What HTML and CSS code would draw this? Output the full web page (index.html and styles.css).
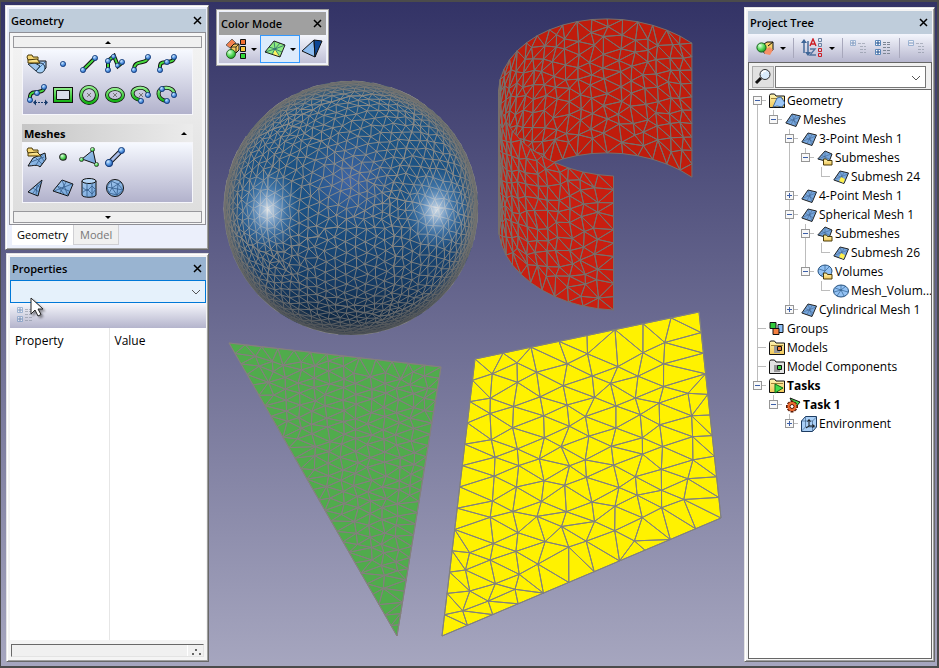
FILE: index.html
```html
<!DOCTYPE html>
<html lang="en">
<head>
<meta charset="utf-8">
<title>Mesh Studio</title>
<link rel="stylesheet" href="styles.css">
</head>
<body>
<svg class="defs" aria-hidden="true">
  <defs>
    <linearGradient id="g-green" x1="0" y1="0" x2="0" y2="1"><stop offset="0" stop-color="#8ff08a"/><stop offset="1" stop-color="#12b012"/></linearGradient>
    <radialGradient id="g-ball" cx=".35" cy=".3" r=".8"><stop offset="0" stop-color="#d6ecff"/><stop offset=".5" stop-color="#5c9de6"/><stop offset="1" stop-color="#1b4fa8"/></radialGradient>
    <radialGradient id="g-gball" cx=".35" cy=".3" r=".8"><stop offset="0" stop-color="#e0ffe0"/><stop offset=".5" stop-color="#5cdc60"/><stop offset="1" stop-color="#108a14"/></radialGradient>
    <linearGradient id="g-mesh" x1="0" y1="0" x2="1" y2="1"><stop offset="0" stop-color="#a9cdf2"/><stop offset="1" stop-color="#6ea0d6"/></linearGradient>
    <linearGradient id="g-folder" x1="0" y1="0" x2="0" y2="1"><stop offset="0" stop-color="#fff6b4"/><stop offset="1" stop-color="#f2c758"/></linearGradient>
    <symbol id="ball" viewBox="0 0 6 6"><circle cx="3" cy="3" r="2.6" fill="url(#g-ball)" stroke="#123a78" stroke-width=".8"/></symbol>
    <symbol id="gball" viewBox="0 0 6 6"><circle cx="3" cy="3" r="2.5" fill="url(#g-gball)" stroke="#222" stroke-width=".8"/></symbol>

    <symbol id="i-shapes" viewBox="0 0 22 22">
      <path d="M11 8h9v7l-3 3h-6z" fill="#a9cdf2" stroke="#111"/><circle cx="14" cy="15" r="5" fill="#a4d0f8" stroke="#234"/><path d="M11 17l8-8" stroke="#4675ad"/><path d="M2 11l8 7 4-5-5-3z" fill="#9ec5ee" stroke="#234"/>
      <path d="M1 4l1-2h4l1 2h5v3H2z" fill="#f6d774" stroke="#4a3a08"/><path d="M2 10V7l9-1 3 4z" fill="url(#g-folder)" stroke="#4a3a08"/>
    </symbol>
    <symbol id="i-point" viewBox="0 0 22 22"><use href="#ball" x="8" y="8" width="6" height="6"/></symbol>
    <symbol id="i-line" viewBox="0 0 22 22"><path d="M5 17L17 5" stroke="#111" stroke-width="4"/><path d="M5 17L17 5" stroke="#46d83e" stroke-width="2"/><use href="#ball" x="2" y="14" width="6" height="6"/><use href="#ball" x="14" y="2" width="6" height="6"/></symbol>
    <symbol id="i-poly" viewBox="0 0 22 22"><path d="M4 18V8l6-5 4 10 5-4" fill="none" stroke="#111" stroke-width="4"/><path d="M4 18V8l6-5 4 10 5-4" fill="none" stroke="#46d83e" stroke-width="2"/><use href="#ball" x="1" y="14" width="6" height="6"/><use href="#ball" x="1" y="5" width="6" height="6"/><use href="#ball" x="7" y="1" width="5" height="5"/><use href="#ball" x="11" y="10" width="5" height="5"/><use href="#ball" x="15" y="6" width="6" height="6"/></symbol>
    <symbol id="i-arc" viewBox="0 0 22 22"><path d="M4 17c0-12 13-4 14-13" fill="none" stroke="#111" stroke-width="4"/><path d="M4 17c0-12 13-4 14-13" fill="none" stroke="#46d83e" stroke-width="2"/><use href="#ball" x="1" y="14" width="6" height="6"/><use href="#ball" x="15" y="1" width="6" height="6"/></symbol>
    <symbol id="i-spline" viewBox="0 0 22 22"><path d="M4 17c-1-10 4-7 8-8s6-1 6-5" fill="none" stroke="#111" stroke-width="4"/><path d="M4 17c-1-10 4-7 8-8s6-1 6-5" fill="none" stroke="#46d83e" stroke-width="2"/><use href="#ball" x="1" y="14" width="6" height="6"/><use href="#ball" x="8" y="6" width="6" height="6"/><use href="#ball" x="15" y="1" width="6" height="6"/></symbol>
    <symbol id="i-fit" viewBox="0 0 22 22"><path d="M4 16c-1-9 4-7 8-8s6-1 6-5" fill="none" stroke="#111" stroke-width="4"/><path d="M4 16c-1-9 4-7 8-8s6-1 6-5" fill="none" stroke="#46d83e" stroke-width="2"/><use href="#ball" x="1" y="13" width="6" height="6"/><use href="#ball" x="8" y="6" width="6" height="6"/><use href="#ball" x="15" y="0" width="6" height="6"/><path d="M9 18.500h10" stroke="#173a6a" stroke-dasharray="2 1"/><path d="M7 18.500l3-3v6zM22 18.500l-3-3v6z" fill="#173a6a"/></symbol>
    <symbol id="i-rect" viewBox="0 0 22 22"><path d="M1 3h20v16H1z" fill="#111"/><path d="M2 4h18v14H2z" fill="url(#g-green)"/><path d="M4.500 6.500h13v9h-13z" fill="#d9dcea" stroke="#111"/></symbol>
    <symbol id="i-circle" viewBox="0 0 22 22"><circle cx="11" cy="11" r="8" fill="none" stroke="#111" stroke-width="4"/><circle cx="11" cy="11" r="8" fill="none" stroke="url(#g-green)" stroke-width="2.4"/><path d="M9 9l4 4m0-4l-4 4" stroke="#777"/></symbol>
    <symbol id="i-ellipse" viewBox="0 0 22 22"><ellipse cx="11" cy="11" rx="8" ry="6" fill="none" stroke="#111" stroke-width="4"/><ellipse cx="11" cy="11" rx="8" ry="6" fill="none" stroke="url(#g-green)" stroke-width="2.4"/><path d="M9 9l4 4m0-4l-4 4" stroke="#777"/></symbol>
    <symbol id="i-arc2" viewBox="0 0 22 22"><path d="M10 16C1 14 0 6 8 4c6-1 11 2 10 7" fill="none" stroke="#111" stroke-width="4"/><path d="M10 16C1 14 0 6 8 4c6-1 11 2 10 7" fill="none" stroke="url(#g-green)" stroke-width="2.4"/><path d="M9 9l4 4m0-4l-4 4" stroke="#777"/><use href="#ball" x="15" y="8" width="6" height="6"/><use href="#ball" x="8" y="14" width="6" height="6"/></symbol>
    <symbol id="i-arc3" viewBox="0 0 22 22"><path d="M10 17C1 15 0 6 8 4c6-1 11 2 10 7" fill="none" stroke="#111" stroke-width="4"/><path d="M10 17C1 15 0 6 8 4c6-1 11 2 10 7" fill="none" stroke="url(#g-green)" stroke-width="2.4"/><use href="#ball" x="3" y="2" width="6" height="6"/><use href="#ball" x="15" y="8" width="6" height="6"/><use href="#ball" x="8" y="14" width="6" height="6"/></symbol>

    <symbol id="i-meshfile" viewBox="0 0 22 22"><path d="M7 12l12-5 1 6-6 8c-3-3-7-1-12-1z" fill="url(#g-mesh)" stroke="#111"/><path d="M9 11l7 7M14 9l4 6M5 16l13-5M10 19l7-11" stroke="#345d8c" stroke-width=".8"/><path d="M1 4l1-2h4l1 2h5v3H2z" fill="#f6d774" stroke="#4a3a08"/><path d="M2 10V7l9-1 4 4z" fill="url(#g-folder)" stroke="#4a3a08"/></symbol>
    <symbol id="i-node" viewBox="0 0 22 22"><use href="#gball" x="7" y="7" width="8" height="8"/></symbol>
    <symbol id="i-tri3" viewBox="0 0 22 22"><path d="M15 4L4 13l14 5z" fill="url(#g-mesh)" stroke="#111"/><use href="#gball" x="12" y="1" width="5" height="5"/><use href="#gball" x="1" y="11" width="5" height="5"/><use href="#gball" x="16" y="16" width="5" height="5"/></symbol>
    <symbol id="i-edge" viewBox="0 0 22 22"><path d="M5 17L17 5" stroke="#111" stroke-width="5"/><path d="M5 17L17 5" stroke="#a9bde8" stroke-width="3"/><use href="#ball" x="1" y="13" width="8" height="8"/><use href="#ball" x="14" y="1" width="7" height="7"/></symbol>
    <symbol id="i-tri" viewBox="0 0 22 22"><path d="M16 3L2 15l10 4z" fill="url(#g-mesh)" stroke="#111"/><path d="M7 11l6 4M11 7l3 4M7 16l9-12M11 8l-1 10" stroke="#345d8c" stroke-width=".8"/></symbol>
    <symbol id="i-quad" viewBox="0 0 22 22"><path d="M10 3l11 4-5 12-15-5z" fill="url(#g-mesh)" stroke="#111"/><path d="M5 9l12 5M14 5L8 16M10 3l6 16M2 14l18-7M6 10l6 7" stroke="#345d8c" stroke-width=".8"/></symbol>
    <symbol id="i-cyl" viewBox="0 0 22 22"><path d="M4 4v14c0 3 14 3 14 0V4" fill="url(#g-mesh)" stroke="#111"/><ellipse cx="11" cy="4" rx="7" ry="2.5" fill="#b9d8f6" stroke="#111"/><path d="M9 6v14M14 6v14M4 10l5 4 5-5 4 4M4 16l5-4 5 5 4-5" fill="none" stroke="#345d8c" stroke-width=".8"/></symbol>
    <symbol id="i-sph" viewBox="0 0 22 22"><circle cx="11" cy="11" r="8.500" fill="url(#g-mesh)" stroke="#111"/><path d="M7 4l7 3 5 6-6 5-8-2-2-6zM7 4l1 7 6-4-1 11-5-7-5-1m5 1l-3 5m3-5l11 2M14 7l3-2" fill="none" stroke="#345d8c" stroke-width=".8"/></symbol>

    <symbol id="i-bylayer" viewBox="0 0 22 22"><path d="M1 7l6-6 4 4-6 5z" fill="#f08050" stroke="#555" stroke-width=".8"/><path d="M6 9l3-3h5v6l-3 3H6z" fill="#f6c860" stroke="#111"/><path d="M6 9h5v6M11 9l3-3" fill="none" stroke="#111" stroke-width=".8"/><circle cx="6" cy="16" r="4.500" fill="url(#g-gball)" stroke="#134a10" stroke-width=".8"/><path d="M15.500 1.500h5v5h-5z" fill="#f07030" stroke="#111"/><path d="M15.500 8.500h5v5h-5z" fill="#f6c840" stroke="#111"/><path d="M15.500 15.500h5v5h-5z" fill="#30d838" stroke="#111"/></symbol>
    <symbol id="i-elem" viewBox="0 0 22 22"><path d="M10 3l11 4-5 12-15-5z" fill="#8cec80"/><path d="M11 11l5 8-7-2z" fill="#fff060"/><path d="M10 3l1 8 10-4M11 11l5 8M11 11l-3 5M11 11L1 14M11 11L5 9M11 11l5-6M11 11l7 3" fill="none" stroke="#2c6a70" stroke-width=".8"/><path d="M10 3l11 4-5 12-15-5z" fill="none" stroke="#222"/></symbol>
    <symbol id="i-pyr" viewBox="0 0 22 22"><path d="M13 2L1 13l13 6z" fill="#8dbcf0" stroke="#111"/><path d="M13 2l8 1-7 16z" fill="#0d4694" stroke="#111"/></symbol>
    <symbol id="i-vis" viewBox="0 0 18 16"><path d="M8 4l3-2h6v8l-3 3H8z" fill="#f6cf68" stroke="#111"/><path d="M12 6l5-4" stroke="#111"/><path d="M7 10l7-3 3 3-3 5-5-1z" fill="#f59068"/><circle cx="5.500" cy="7.500" r="4.600" fill="url(#g-gball)" stroke="#14601a"/></symbol>
    <symbol id="i-sort" viewBox="0 0 22 20"><path d="M3 3v12M7 3v13" stroke="#3e6596" stroke-width="1.4"/><path d="M0 5l3-4 3 4zM4 14l3 4 3-4z" fill="#3e6596"/><path d="M9 8l3-7 3 7M10 6h4" fill="none" stroke="#cc1c24" stroke-width="1.4"/><path d="M9 11h5l-5 6h6" fill="none" stroke="#5474a0" stroke-width="1.4"/><path d="M17.500.5h3v3h-3zM17.500 5.500h3v3h-3z" fill="none" stroke="#6a82a2"/><path d="M17.500 10.500h3v3h-3zM17.500 15.500h3v3h-3z" fill="none" stroke="#cc1c24"/></symbol>
    <symbol id="i-expand" viewBox="0 0 16 16"><path d="M.5.5h5v5h-5zM.5 9.500h5v5h-5z" fill="#fff" stroke="#5a86b8"/><path d="M1 3h4M3 1v4M1 12h4M3 10v4" stroke="#164b8c"/><path d="M8 2.500h8M8 4.500h8M8 7.500h8M8 10.500h8M8 13.500h8" stroke="#7c8694" stroke-dasharray="3 1"/></symbol>
    <symbol id="i-expand1" viewBox="0 0 16 16"><path d="M.5.5h5v5h-5z" fill="#fff" stroke="#5a86b8"/><path d="M1 3h4M3 1v4" stroke="#164b8c"/><path d="M8 3.500h8M10 6.500h6M10 9.500h6M10 12.500h6" stroke="#7c8694" stroke-dasharray="3 1"/></symbol>
    <symbol id="i-collapse" viewBox="0 0 16 16"><path d="M.5.5h5v5h-5z" fill="#fff" stroke="#5a86b8"/><path d="M1 3h4" stroke="#164b8c"/><path d="M8 3.500h8M10 6.500h6M10 9.500h6M10 12.500h6" stroke="#7c8694" stroke-dasharray="3 1"/></symbol>
    <symbol id="i-search" viewBox="0 0 18 18"><path d="M2 15l5-5" stroke="#111" stroke-width="3"/><circle cx="11" cy="6.500" r="5" fill="#d9ebfb" stroke="#333"/><path d="M8 6c0-2 2-3 4-3" fill="none" stroke="#fff" stroke-width="1.500"/></symbol>

    <symbol id="t-folder" viewBox="0 0 16 16"><path d="M.5 14.500V2.500l1-1.500h4l1.500 2h8.500v11.500z" fill="url(#g-folder)" stroke="#111"/><path d="M2 5.500h12" stroke="#8a6a20" stroke-width=".8"/></symbol>
    <symbol id="t-geom" viewBox="0 0 16 16"><use href="#t-folder" width="16" height="16"/><path d="M8 5l4-1 4 6-3 4-5-1-4 1z" fill="#9cc6f6" stroke="#23518c" stroke-width=".8"/></symbol>
    <symbol id="t-mesh" viewBox="0 0 16 16"><path d="M7 2l8.500 2-4.500 10.500L.8 11z" fill="#76a6dc" stroke="#222"/><path d="M4 6l8.500 5M11 3.500L6 12.500M7 2l4 12M1 10.500l14-5.500" stroke="#3c5c86" stroke-width=".5"/></symbol>
    <symbol id="t-subs" viewBox="0 0 16 16"><path d="M8 1l7 3-3 8L.8 9z" fill="#76a6dc" stroke="#222"/><path d="M4 5l8 4M8 1v8M1 9l13-5" stroke="#3c5c86" stroke-width=".5"/><path d="M6.500 15V9h3l1 1.500H15V15z" fill="url(#g-folder)" stroke="#4a3a08"/></symbol>
    <symbol id="t-sub" viewBox="0 0 16 16"><use href="#t-mesh" width="16" height="16"/><path d="M8 8l4 2-1.500 4L6 12z" fill="#fff04a"/></symbol>
    <symbol id="t-vols" viewBox="0 0 16 16"><ellipse cx="8" cy="7" rx="7" ry="6" fill="#93c2f4" stroke="#24507e"/><path d="M2 5l6 2 5-5M8 7l-4 5M8 1v6" fill="none" stroke="#24507e" stroke-width=".6"/><path d="M6.500 15V9h3l1 1.500H15V15z" fill="url(#g-folder)" stroke="#4a3a08"/></symbol>
    <symbol id="t-vol" viewBox="0 0 16 16"><ellipse cx="8" cy="8" rx="7.500" ry="6" fill="#93c2f4" stroke="#24507e"/><path d="M2 5l6 2 5-4M8 7l-4 6M8 2v5l7 2M8 7l3 6M1 9l7-2" fill="none" stroke="#24507e" stroke-width=".6"/></symbol>
    <symbol id="t-groups" viewBox="0 0 16 16"><path d="M1 1.500h6v6H1z" fill="#30c83a" stroke="#111"/><path d="M9 3.500h5v8H9z" fill="#8cc0f8" stroke="#111"/><path d="M4 7.500h6v6H4z" fill="#f58040" stroke="#111"/></symbol>
    <symbol id="t-models" viewBox="0 0 16 16"><use href="#t-folder" width="16" height="16"/><path d="M5 6v7h6v-2H8V6z" fill="#999"/><path d="M8.500 6.500h4v4h-4z" fill="#f07838" stroke="#111"/></symbol>
    <symbol id="t-comps" viewBox="0 0 16 16"><path d="M.5 14.500V2.500l1-1.500h4l1.500 2h8.500v11.500z" fill="#e2e2e2" stroke="#111"/><path d="M5 6v7h6v-2H8V6z" fill="#999"/><path d="M8.500 6.500h4v4h-4z" fill="#38d040" stroke="#111"/></symbol>
    <symbol id="t-tasks" viewBox="0 0 16 16"><use href="#t-folder" width="16" height="16"/><path d="M6 6l8 4-8 5z" fill="#44dc4c" stroke="#0c6a14"/></symbol>
    <symbol id="t-task" viewBox="0 0 16 16"><path d="M5 1l10 4-5 6z" fill="#44dc4c" stroke="#111"/><path d="M7 3.500v12M1 9.500h12M3 5.500l8 8M11 5.500l-8 8" stroke="#5a1a04" stroke-width="3"/><circle cx="7" cy="9.500" r="4.500" fill="#f06a30"/><circle cx="7" cy="9.500" r="2" fill="#fff" stroke="#5a1a04"/></symbol>
    <symbol id="t-env" viewBox="0 0 16 16"><path d="M.5 5l4-4.500h11v10.500l-4 4.500H.5z" fill="#a9cff6" stroke="#1d3c62"/><path d="M.5 5h11v10M11.500 5l4-4M4.500 1v10h11M4.500 11l-4 4" fill="none" stroke="#1d3c62" stroke-width=".5"/><path d="M8 4v6h5M8 10l-3 2M6.500 5.500L8 3.500l1.500 2M11.500 8.500l2 1.500-2 1.500" fill="none" stroke="#111"/></symbol>
  </defs>
</svg>

<div class="app">
  <svg class="scene" id="scene" viewBox="0 0 939 668" preserveAspectRatio="xMidYMid meet" role="img" aria-label="Mesh view">
    <defs>
      <linearGradient id="s-base" x1="0" y1="0" x2="0" y2="1"><stop offset="0" stop-color="#1d5584"/><stop offset=".5" stop-color="#1c5183"/><stop offset=".8" stop-color="#174270"/><stop offset="1" stop-color="#0e2844"/></linearGradient>
      <radialGradient id="s-spot"><stop offset="0" stop-color="#fff" stop-opacity=".8"/><stop offset=".3" stop-color="#c8e2ff" stop-opacity=".55"/><stop offset=".6" stop-color="#7fb4e8" stop-opacity=".3"/><stop offset="1" stop-color="#7fb4e8" stop-opacity="0"/></radialGradient>
      <radialGradient id="s-glow"><stop offset="0" stop-color="#6478c8" stop-opacity=".5"/><stop offset="1" stop-color="#6478c8" stop-opacity="0"/></radialGradient>
      <radialGradient id="s-rim"><stop offset=".88" stop-color="#6a6a68" stop-opacity="0"/><stop offset="1" stop-color="#6a6a68" stop-opacity=".9"/></radialGradient>
      <linearGradient id="s-shade" x1="0" y1="0" x2="0" y2="1"><stop offset=".6" stop-color="#0a1626" stop-opacity="0"/><stop offset="1" stop-color="#0a1626" stop-opacity=".35"/></linearGradient>
    </defs>
  </svg>

  <div class="column">
    <section class="window">
      <header class="titlebar"><h2>Geometry</h2><button class="close" aria-label="Close Geometry"><svg viewBox="0 0 9 9"><path d="M1 1l7 7M8 1L1 8"/></svg></button></header>
      <div class="toolbox">
        <button class="scroll up" aria-label="Scroll up"></button>
        <div class="groups">
          <div class="tools">
            <button aria-label="Import geometry"><svg><use href="#i-shapes"/></svg></button>
            <button aria-label="Point"><svg><use href="#i-point"/></svg></button>
            <button aria-label="Line"><svg><use href="#i-line"/></svg></button>
            <button aria-label="Polyline"><svg><use href="#i-poly"/></svg></button>
            <button aria-label="Curve"><svg><use href="#i-arc"/></svg></button>
            <button aria-label="Spline"><svg><use href="#i-spline"/></svg></button>
            <button aria-label="Fitted spline"><svg><use href="#i-fit"/></svg></button>
            <button aria-label="Rectangle"><svg><use href="#i-rect"/></svg></button>
            <button aria-label="Circle"><svg><use href="#i-circle"/></svg></button>
            <button aria-label="Ellipse"><svg><use href="#i-ellipse"/></svg></button>
            <button aria-label="Center arc"><svg><use href="#i-arc2"/></svg></button>
            <button aria-label="Three-point arc"><svg><use href="#i-arc3"/></svg></button>
          </div>
          <h3 class="group-title">Meshes</h3>
          <div class="tools">
            <button aria-label="Import mesh"><svg><use href="#i-meshfile"/></svg></button>
            <button aria-label="Node"><svg><use href="#i-node"/></svg></button>
            <button aria-label="Element"><svg><use href="#i-tri3"/></svg></button>
            <button aria-label="Edge"><svg><use href="#i-edge"/></svg></button>
            <span></span><span></span>
            <button aria-label="3-point mesh"><svg><use href="#i-tri"/></svg></button>
            <button aria-label="4-point mesh"><svg><use href="#i-quad"/></svg></button>
            <button aria-label="Cylindrical mesh"><svg><use href="#i-cyl"/></svg></button>
            <button aria-label="Spherical mesh"><svg><use href="#i-sph"/></svg></button>
          </div>
        </div>
        <button class="scroll down" aria-label="Scroll down"></button>
      </div>
      <div class="tabs"><button class="tab active">Geometry</button><button class="tab">Model</button></div>
    </section>

    <section class="window properties">
      <header class="titlebar focused"><h2>Properties</h2><button class="close" aria-label="Close Properties"><svg viewBox="0 0 9 9"><path d="M1 1l7 7M8 1L1 8"/></svg></button></header>
      <div class="combo hot"><select aria-label="Selected object"><option></option></select><svg class="chevron" viewBox="0 0 10 6"><path d="M1 1l4 4 4-4"/></svg></div>
      <div class="prop-tools"><button disabled aria-label="Expand all"><svg><use href="#i-expand"/></svg></button>
        <svg class="cursor" viewBox="0 0 14 20"><path d="M1 1v16l4-4 3 6 3-1.500-3-5.500h5z" fill="#fff" stroke="#222"/></svg>
      </div>
      <table class="props"><thead><tr><th>Property</th><th>Value</th></tr></thead><tbody><tr><td></td><td></td></tr></tbody></table>
      <footer class="status"><i></i></footer>
    </section>
  </div>

  <section class="window palette">
    <header class="titlebar gray"><h2>Color Mode</h2><button class="close" aria-label="Close Color Mode"><svg viewBox="0 0 9 9"><path d="M1 1l7 7M8 1L1 8"/></svg></button></header>
    <div class="modes">
      <button aria-label="Color by object"><svg><use href="#i-bylayer"/></svg><b class="arrow"></b></button>
      <button class="on" aria-label="Color by element"><svg><use href="#i-elem"/></svg><b class="arrow"></b></button>
      <button aria-label="Color by side"><svg><use href="#i-pyr"/></svg></button>
    </div>
  </section>

  <section class="window project">
    <header class="titlebar"><h2>Project Tree</h2><button class="close" aria-label="Close Project Tree"><svg viewBox="0 0 9 9"><path d="M1 1l7 7M8 1L1 8"/></svg></button></header>
    <div class="tree-tools">
      <button aria-label="Visibility"><svg><use href="#i-vis"/></svg><b class="arrow"></b></button><hr>
      <button aria-label="Sort"><svg class="wide"><use href="#i-sort"/></svg><b class="arrow"></b></button><hr>
      <button disabled aria-label="Expand selected"><svg><use href="#i-expand1"/></svg></button>
      <button aria-label="Expand all"><svg><use href="#i-expand"/></svg></button><hr>
      <button disabled aria-label="Collapse"><svg><use href="#i-collapse"/></svg></button>
    </div>
    <div class="search"><button aria-label="Search"><svg><use href="#i-search"/></svg></button><div class="combo"><select aria-label="Search text"><option></option></select><svg class="chevron" viewBox="0 0 10 6"><path d="M1 1l4 4 4-4"/></svg></div></div>
    <ul class="tree">
      <li><div class="row"><button class="toggle" aria-label="Collapse"></button><svg><use href="#t-geom"/></svg><span>Geometry</span></div>
        <ul><li><div class="row"><button class="toggle" aria-label="Collapse"></button><svg><use href="#t-mesh"/></svg><span>Meshes</span></div>
          <ul>
            <li><div class="row"><button class="toggle" aria-label="Collapse"></button><svg><use href="#t-mesh"/></svg><span>3-Point Mesh 1</span></div>
              <ul><li><div class="row"><button class="toggle" aria-label="Collapse"></button><svg><use href="#t-subs"/></svg><span>Submeshes</span></div>
                <ul><li><div class="row leaf"><svg><use href="#t-sub"/></svg><span>Submesh 24</span></div></li></ul></li></ul></li>
            <li><div class="row"><button class="toggle plus" aria-label="Expand"></button><svg><use href="#t-mesh"/></svg><span>4-Point Mesh 1</span></div></li>
            <li><div class="row"><button class="toggle" aria-label="Collapse"></button><svg><use href="#t-mesh"/></svg><span>Spherical Mesh 1</span></div>
              <ul>
                <li><div class="row"><button class="toggle" aria-label="Collapse"></button><svg><use href="#t-subs"/></svg><span>Submeshes</span></div>
                  <ul><li><div class="row leaf"><svg><use href="#t-sub"/></svg><span>Submesh 26</span></div></li></ul></li>
                <li><div class="row"><button class="toggle" aria-label="Collapse"></button><svg><use href="#t-vols"/></svg><span>Volumes</span></div>
                  <ul><li><div class="row leaf"><svg><use href="#t-vol"/></svg><span>Mesh_Volum...</span></div></li></ul></li>
              </ul></li>
            <li><div class="row"><button class="toggle plus" aria-label="Expand"></button><svg><use href="#t-mesh"/></svg><span>Cylindrical Mesh 1</span></div></li>
          </ul></li></ul></li>
      <li><div class="row leaf"><svg><use href="#t-groups"/></svg><span>Groups</span></div></li>
      <li><div class="row leaf"><svg><use href="#t-models"/></svg><span>Models</span></div></li>
      <li><div class="row leaf"><svg><use href="#t-comps"/></svg><span>Model Components</span></div></li>
      <li><div class="row"><button class="toggle" aria-label="Collapse"></button><svg><use href="#t-tasks"/></svg><strong>Tasks</strong></div>
        <ul><li><div class="row"><button class="toggle" aria-label="Collapse"></button><svg><use href="#t-task"/></svg><strong>Task 1</strong></div>
          <ul><li><div class="row"><button class="toggle plus" aria-label="Expand"></button><svg><use href="#t-env"/></svg><span>Environment</span></div></li></ul></li></ul></li>
    </ul>
  </section>
</div>
<script src="scene.js"></script>
</body>
</html>
```
FILE: styles.css
```css
* { box-sizing: border-box; }

body {
  margin: 0;
  font-family: "Open Sans", "Noto Sans", sans-serif;
  font-size: 12px;
  line-height: 19px;
  color: #000;
}

button, select {
  margin: 0;
  padding: 0;
  border: 0;
  border-radius: 0;
  background: none;
  color: inherit;
  font: inherit;
}

h2, h3, ul { margin: 0; padding: 0; }
ul { list-style: none; }
svg { display: block; }
strong { font-weight: 700; }
.defs { position: absolute; width: 0; height: 0; }

.app {
  position: relative;
  display: grid;
  grid-template-columns: 204px minmax(0, 1fr) 191px;
  height: 100vh;
  min-height: 480px;
  padding: 3px 2px 4px 4px;
  border: 2px solid #4b4b4b;
  border-left-width: 1px;
  background: linear-gradient(#333366, #a6a6bf);
}

.scene {
  position: absolute;
  inset: -2px -2px -2px -1px;
  width: calc(100% + 3px);
  height: calc(100% + 4px);
}

.column {
  display: flex;
  flex-direction: column;
  gap: 3px;
  min-height: 0;
}

/* Windows */
.window {
  position: relative;
  padding: 3px 2px 3px 3px;
  border: 1px solid #e3e3e3;
  border-right-color: #696969;
  border-bottom-color: #696969;
  background: #ebeffb;
  box-shadow: inset 1px 1px #fff, inset -1px -1px #a0a0a0;
}

.titlebar {
  display: flex;
  flex: none;
  align-items: center;
  justify-content: space-between;
  height: 23px;
  padding: 0 4px 0 2px;
  background: #bfcddb;
}
.titlebar.focused { background: #99b4d1; }
.titlebar.gray { background: #a0a0a0; }
.titlebar h2 { font-size: 11px; font-weight: 600; }

.close { width: 9px; height: 9px; }
.close svg { width: 9px; height: 9px; stroke: #000; stroke-width: 1.5; fill: none; }

/* Geometry toolbox */
.toolbox {
  display: flex;
  flex-direction: column;
  padding: 3px 3px 1px;
  border: 1px solid #8f8f96;
  background: #f6f6f6;
}
.scroll {
  display: flex;
  align-items: center;
  justify-content: center;
  height: 12px;
  border: 1px solid #98989c;
  background: #f0f0f0;
}
.scroll::before, .group-title::after {
  content: "";
  border: 3px solid transparent;
  border-top: 0;
  border-bottom-color: #000;
}
.scroll.down::before { transform: rotate(180deg); }
.groups { padding: 1px 9px 8px; background: linear-gradient(#f2f2f2, #dedede); }
.tools {
  display: grid;
  grid-template-columns: repeat(6, 26px);
  grid-auto-rows: 28px;
  row-gap: 3px;
  padding: 0 1px;
  border: 1px solid #f6f6fb;
  background: linear-gradient(#f6f9ff, #b2b2cc);
}
.tools:first-child { padding-bottom: 5px; }
.tools button { display: grid; place-items: center; }
.tools svg { width: 22px; height: 22px; }
.tools + .group-title { margin-top: 9px; }
.group-title {
  display: flex;
  align-items: center;
  justify-content: space-between;
  height: 18px;
  padding: 0 6px 0 2px;
  font-size: 11px;
  font-weight: 700;
  background: linear-gradient(90deg, #c6c6c6, #ececec);
}

.tabs { display: flex; padding: 0 3px; height: 21px; align-items: flex-start; }
.tab {
  height: 20px;
  padding: 0 6px;
  border: 1px solid #d0d0d4;
  border-top: 0;
  background: #f0f0f0;
  color: #777;
  font-size: 11px;
}
.tab.active { padding: 0 4px; background: #fff; border-color: #fff; color: #000; }

/* Combo boxes */
.combo { position: relative; flex: none; height: 23px; border: 1px solid #777; background: #fff; }
.combo select { display: block; width: 100%; height: 100%; appearance: none; outline: 0; }
.combo.hot { border-color: #0078d7; background: #e5f1fb; }
.chevron {
  position: absolute;
  top: 8px;
  right: 4px;
  width: 10px;
  height: 6px;
  fill: none;
  stroke: #555;
  pointer-events: none;
}

/* Properties */
.properties { display: flex; flex: 1; flex-direction: column; min-height: 0; margin-left: 1px; background: #f4f4f4; }
.prop-tools { position: relative; flex: none; height: 25px; padding: 4px 7px; background: linear-gradient(#f6f7fc, #b4b4cc); }
.prop-tools button svg { width: 16px; height: 16px; }
button:disabled { opacity: .5; }
.cursor { position: absolute; left: 20px; top: -6px; width: 14px; height: 20px; filter: drop-shadow(2px 2px 1px #0006); }
.props { flex: 1; width: 100%; height: 100%; border-collapse: collapse; background: #fff; table-layout: fixed; }
.props th { height: 25px; padding: 0 5px; font-weight: 400; text-align: left; }
.props th:first-child { width: 99px; }
.props th + th, .props td + td { border-left: 1px solid #e6e6e6; }
.props td { padding: 0; }
.status { flex: none; display: flex; justify-content: flex-end; height: 13px; margin: 4px 2px 1px 1px; border: 1px solid; border-color: #696969 #e3e3e3 #e3e3e3 #696969; background: #f0f0f0; }
.status i { width: 16px; border-left: 1px solid #fff; background: radial-gradient(circle at 8px 5px, #666 1px, transparent 1px), radial-gradient(circle at 5px 9px, #666 1px, transparent 1px), radial-gradient(circle at 12px 9px, #666 1px, transparent 1px); }

/* Color Mode */
.palette { justify-self: start; align-self: start; width: 113px; margin: 4px 0 0 7px; padding: 2px; border: 1px solid #a0a0a0; box-shadow: inset 0 0 0 1px #f4f4f4; }
.modes { display: flex; height: 28px; background: linear-gradient(#f4f6fd, #c0c0d6); }
.modes button { display: flex; align-items: center; gap: 4px; padding: 0 3px; border: 1px solid transparent; }
.modes button:first-child { padding: 0 2px 0 5px; }
.modes button:last-child { padding: 0; }
.modes .on { border-color: #3399ff; background: #dcebfc; }
.modes svg { width: 22px; height: 22px; }
.arrow { border: 3px solid transparent; border-bottom: 0; border-top-color: #000; }

/* Project Tree */
.project { display: flex; flex-direction: column; grid-column: 3; margin-top: 2px; padding-bottom: 2px; background: #f4f4f4; min-height: 0; }
.tree-tools { display: flex; flex: none; align-items: center; justify-content: space-between; height: 28px; padding: 0 7px 0 8px; background: linear-gradient(#f4f6fd, #b6b6ce); }
.tree-tools button { display: flex; align-items: center; gap: 6px; }
.tree-tools svg { width: 18px; height: 16px; }
.tree-tools svg.wide { width: 22px; height: 20px; }
.tree-tools hr { width: 1px; height: 20px; margin: 0; border: 0; background: #a8a8bc; }
.search { display: flex; flex: none; gap: 1px; height: 28px; padding: 3px 5px 1px 3px; border: 1px solid #666; background: #f0f0f0; }
.search button { display: grid; place-items: center; width: 22px; height: 22px; border: 1px solid #adadad; background: #e1e1e1; }
.search button svg { width: 18px; height: 18px; }
.search .combo { flex: 1; height: 22px; }

.tree { flex: 1; min-height: 0; overflow: hidden; padding-top: 1px; border: 1px solid #666; border-top: 0; background: #fff; }
.tree ul { margin-left: 16px; }
.tree li { position: relative; }
.tree li::before { content: ""; position: absolute; left: 8px; top: 0; bottom: 0; border-left: 1px solid #bcbcbc; }
.tree > li:first-child::before { top: 9px; }
.tree li:last-child::before { bottom: auto; height: 9px; }
.row { position: relative; display: flex; align-items: center; gap: 2px; height: 19px; padding-left: 4px; white-space: nowrap; }
.row::before { content: ""; position: absolute; left: 8px; top: 9px; width: 9px; border-top: 1px solid #bcbcbc; }
.row svg { flex: none; width: 16px; height: 16px; }
.row.leaf { padding-left: 20px; }
.toggle {
  position: relative;
  flex: none;
  width: 9px;
  height: 9px;
  margin-right: 5px;
  border: 1px solid #969696;
  background: linear-gradient(#3c5fa8, #3c5fa8) center / 5px 1px no-repeat, #f8f8f8;
}
.toggle.plus { background: linear-gradient(#3c5fa8, #3c5fa8) center / 5px 1px no-repeat, linear-gradient(#3c5fa8, #3c5fa8) center / 1px 5px no-repeat, #f8f8f8; }
```
FILE: scene.js
```js
const scene = document.getElementById("scene");
const NS = "http://www.w3.org/2000/svg";

function add(tag, attrs) {
  const el = document.createElementNS(NS, tag);
  for (const key in attrs) el.setAttribute(key, attrs[key]);
  scene.appendChild(el);
}

let seed = 7;
function rand() {
  seed = (seed * 16807) % 2147483647;
  return seed / 2147483647 - 0.5;
}

// Bowyer-Watson triangulation; returns index triples
function triangulate(points) {
  const n = points.length;
  const p = points.concat([[-9000, -9000], [9000, -9000], [0, 18000]]);
  const make = (a, b, c) => {
    const [ax, ay] = p[a], [bx, by] = p[b], [cx, cy] = p[c];
    const d = 2 * (ax * (by - cy) + bx * (cy - ay) + cx * (ay - by)) || 1e-9;
    const a2 = ax * ax + ay * ay, b2 = bx * bx + by * by, c2 = cx * cx + cy * cy;
    const x = (a2 * (by - cy) + b2 * (cy - ay) + c2 * (ay - by)) / d;
    const y = (a2 * (cx - bx) + b2 * (ax - cx) + c2 * (bx - ax)) / d;
    return { v: [a, b, c], x, y, r: (ax - x) ** 2 + (ay - y) ** 2 };
  };
  let tris = [make(n, n + 1, n + 2)];
  for (let i = 0; i < n; i++) {
    const edges = new Map();
    tris = tris.filter(t => {
      if ((p[i][0] - t.x) ** 2 + (p[i][1] - t.y) ** 2 >= t.r) return true;
      for (let k = 0; k < 3; k++) {
        const a = t.v[k], b = t.v[(k + 1) % 3];
        const key = Math.min(a, b) + "_" + Math.max(a, b);
        if (edges.has(key)) edges.delete(key); else edges.set(key, [a, b]);
      }
      return false;
    });
    for (const [a, b] of edges.values()) tris.push(make(a, b, i));
  }
  return tris.filter(t => t.v.every(k => k < n)).map(t => t.v);
}

// Mesh of a convex clockwise polygon with a target edge length
function meshPolygon(poly, size, jitter) {
  const pts = [];
  let cx = 0, cy = 0;
  poly.forEach(([x, y]) => { cx += x / poly.length; cy += y / poly.length; });
  const sides = poly.map((a, i) => {
    const b = poly[(i + 1) % poly.length];
    const len = Math.hypot(b[0] - a[0], b[1] - a[1]);
    const count = Math.round(len / size);
    for (let k = 0; k < count; k++) {
      const t = k / count, bow = Math.sin(Math.PI * t) * 0.02;
      pts.push([a[0] + (b[0] - a[0]) * t + (a[0] + b[0] > 2 * cx ? bow : -bow),
                a[1] + (b[1] - a[1]) * t + (a[1] + b[1] > 2 * cy ? bow : -bow)]);
    }
    return [a, (b[0] - a[0]) / len, (b[1] - a[1]) / len];
  });
  const xs = poly.map(q => q[0]), ys = poly.map(q => q[1]);
  let col = 0;
  for (let x = Math.min(...xs); x < Math.max(...xs); x += size * 0.88, col++) {
    for (let y = Math.min(...ys) + (col % 2) * size / 2; y < Math.max(...ys); y += size) {
      const q = [x + rand() * size * jitter, y + rand() * size * jitter];
      if (sides.every(([a, dx, dy]) => dx * (q[1] - a[1]) - dy * (q[0] - a[0]) > size * 0.55)) pts.push(q);
    }
  }
  return triangulate(pts).map(t => t.map(i => pts[i]));
}

function toPath(tris, map) {
  return tris.map(t => "M" + t.map(q => map(q).map(v => v.toFixed(1)).join(" ")).join("L") + "Z").join("");
}

function drawFlat(poly, stretch, size, fill, stroke, width) {
  const tris = meshPolygon(poly.map(([x, y]) => [x, y * stretch]), size, 0.34);
  add("polygon", { points: poly.join(" "), fill, stroke });
  add("path", { d: toPath(tris, ([x, y]) => [x, y / stretch]), fill: "none", stroke, "stroke-width": width });
}

function drawCylinder() {
  const start = 47 * Math.PI / 180, end = 1.5 * Math.PI, radius = 113;
  const length = (end - start) * radius;
  const tris = meshPolygon([[0, 0], [length, 0], [length, 150], [0, 150]], 15, 0.4);
  const map = ([u, v]) => {
    const t = start + u / radius, x = 115 * Math.cos(t);
    return [613.5 + x, 97.5 - 78.5 * Math.sin(t) + x * 0.04 + v * 134 / 150];
  };
  const split = (Math.PI - start) * radius;
  const back = tris.filter(t => (t[0][0] + t[1][0] + t[2][0]) / 3 < split);
  const front = tris.filter(t => !back.includes(t));
  const stroke = "#76706c";
  add("path", { d: toPath(back, map), fill: "#c01c0c", stroke, "stroke-linejoin": "round" });
  add("path", { d: toPath(front, map), fill: "#c81e10", stroke, "stroke-linejoin": "round" });
}

function drawSphere(cx, cy, r) {
  add("circle", { cx, cy, r, fill: "url(#s-base)" });
  add("circle", { cx: 350, cy: 180, r: 48, fill: "url(#s-glow)" });
  const g = (1 + Math.sqrt(5)) / 2;
  const v = [[-1, g, 0], [1, g, 0], [-1, -g, 0], [1, -g, 0], [0, -1, g], [0, 1, g], [0, -1, -g], [0, 1, -g], [g, 0, -1], [g, 0, 1], [-g, 0, -1], [-g, 0, 1]];
  const faces = [[0, 11, 5], [0, 5, 1], [0, 1, 7], [0, 7, 10], [0, 10, 11], [1, 5, 9], [5, 11, 4], [11, 10, 2], [10, 7, 6], [7, 1, 8], [3, 9, 4], [3, 4, 2], [3, 2, 6], [3, 6, 8], [3, 8, 9], [4, 9, 5], [2, 4, 11], [6, 2, 10], [8, 6, 7], [9, 8, 1]];
  const n = 14;
  const place = q => {
    let [x, y, z] = q;
    const l = Math.hypot(x, y, z);
    x /= l; y /= l; z /= l;
    const w = 0.012;
    [x, y, z] = [x + w * Math.sin(41 * y + 29 * z), y + w * Math.sin(37 * z + 31 * x), z + w * Math.sin(43 * x + 23 * y)];
    const m = Math.hypot(x, y, z);
    x /= m; y /= m; z /= m;
    const a = 0.35, b = 0.5;
    [x, z] = [x * Math.cos(a) + z * Math.sin(a), z * Math.cos(a) - x * Math.sin(a)];
    [y, z] = [y * Math.cos(b) - z * Math.sin(b), y * Math.sin(b) + z * Math.cos(b)];
    return [cx + r * x, cy - r * y, z];
  };
  let d = "";
  for (const [a, b, c] of faces) {
    const at = (i, j) => place([0, 1, 2].map(k => v[a][k] + (v[b][k] - v[a][k]) * i / n + (v[c][k] - v[a][k]) * j / n));
    const tri = (...t) => {
      if (t.every(q => q[2] > 0)) d += "M" + t.map(q => q[0].toFixed(1) + " " + q[1].toFixed(1)).join("L") + "Z";
    };
    for (let i = 0; i < n; i++) for (let j = 0; i + j < n; j++) tri(at(i, j), at(i + 1, j), at(i, j + 1));
  }
  add("path", { d, fill: "none", stroke: "#8b8b88" });
  add("circle", { cx, cy, r, fill: "url(#s-rim)" });
  add("circle", { cx, cy, r, fill: "url(#s-shade)" });
  add("ellipse", { cx: 268, cy: 210, rx: 32, ry: 42, fill: "url(#s-spot)" });
  add("ellipse", { cx: 436, cy: 210, rx: 32, ry: 42, fill: "url(#s-spot)" });
}

drawSphere(351, 208, 127);
drawCylinder();
drawFlat([[229, 343], [441, 367], [397, 636]], 1.4, 16, "#50ab4c", "#84807e", 1);
drawFlat([[475, 359], [699, 312], [721, 518], [442, 636]], 1.35, 28, "#fff200", "#808080", 1);
```
